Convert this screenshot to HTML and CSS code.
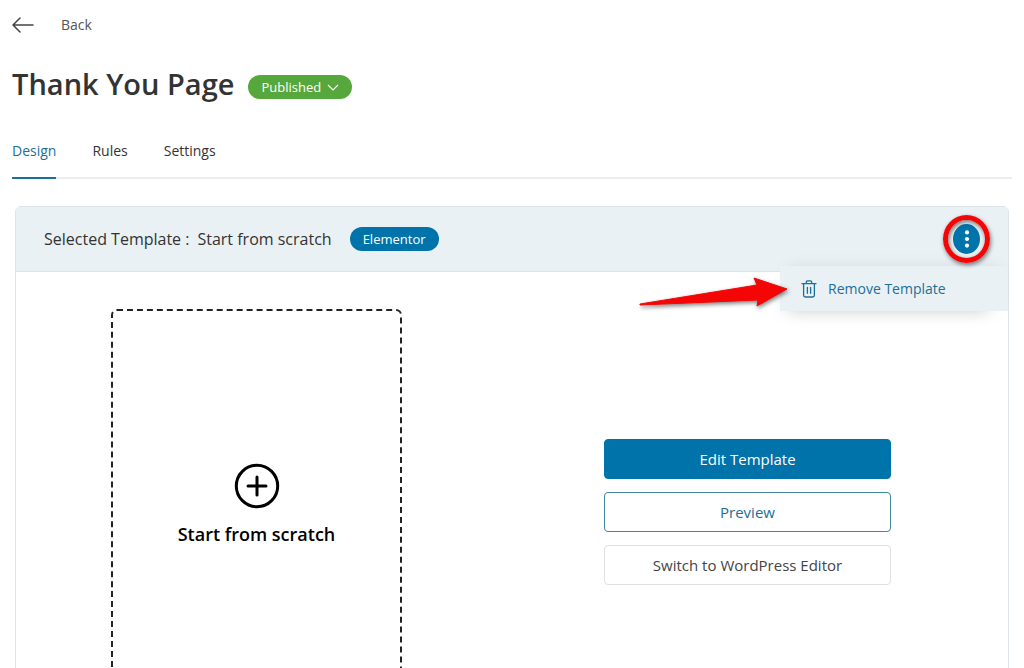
FILE: index.html
```html
<!DOCTYPE html>
<html lang="en">
<head>
    <meta charset="UTF-8">
    <meta name="viewport" content="width=device-width, initial-scale=1.0">
    <title>Thank You Page</title>
    <link rel="stylesheet" href="styles.css">
</head>
<body>
    <div class="page">
        <a href="#" class="back">
            <svg width="22" height="16" viewBox="0 0 22 16" fill="none" stroke="#444" stroke-width="1.5" stroke-linecap="round" stroke-linejoin="round">
                <path d="M21 8H1M8 1L1 8l7 7"/>
            </svg>
            <span>Back</span>
        </a>

        <header class="title">
            <h1>Thank You Page</h1>
            <button type="button" class="badge badge-green">
                Published
                <svg width="12" height="7" viewBox="0 0 12 7" fill="none" stroke="currentColor" stroke-width="1.1">
                    <path d="M1 1l5 5 5-5"/>
                </svg>
            </button>
        </header>

        <nav class="tabs">
            <a href="#" class="tab active">Design</a>
            <a href="#" class="tab">Rules</a>
            <a href="#" class="tab">Settings</a>
        </nav>

        <section class="card">
            <div class="card-header">
                <h2><span>Selected Template :</span><span>Start from scratch</span></h2>
                <span class="badge badge-blue">Elementor</span>
                <div class="more">
                    <button type="button" class="more-btn" aria-label="More options">
                        <svg width="6" height="18" viewBox="0 0 6 18" fill="#fff">
                            <circle cx="3" cy="2.4" r="2.1"/>
                            <circle cx="3" cy="9" r="2.1"/>
                            <circle cx="3" cy="15.6" r="2.1"/>
                        </svg>
                    </button>
                    <span class="ring"></span>
                </div>
                <div class="menu">
                    <button type="button" class="menu-item">
                        <svg width="16" height="18" viewBox="0 0 16 18" fill="none" stroke="currentColor" stroke-width="1.3" stroke-linecap="round" stroke-linejoin="round">
                            <path d="M1 3.7h14M5.3 3.5V2.2q0-1.3 1.3-1.3h2.8q1.3 0 1.3 1.3v1.3M2.6 3.8v11.4q0 1.8 1.8 1.8h7.2q1.8 0 1.8-1.8V3.8M6.4 7.3v6M9.6 7.3v6"/>
                        </svg>
                        Remove Template
                    </button>
                </div>
                <svg class="arrow" width="156" height="40" viewBox="0 0 156 40">
                    <path d="M2 28L119 9 116 2 149 13 119 30 120 24 2 29z"/>
                </svg>
            </div>

            <div class="card-body">
                <a href="#" class="scratch">
                    <svg width="46" height="46" viewBox="0 0 46 46" fill="none" stroke="#000" stroke-width="3" stroke-linecap="round">
                        <circle cx="23" cy="23" r="20.7"/>
                        <path d="M23 14v18M14 23h18"/>
                    </svg>
                    <span>Start from scratch</span>
                </a>
                <div class="actions">
                    <button type="button" class="btn btn-primary">Edit Template</button>
                    <button type="button" class="btn btn-outline">Preview</button>
                    <button type="button" class="btn">Switch to WordPress Editor</button>
                </div>
            </div>
        </section>
    </div>
</body>
</html>
```
FILE: styles.css
```css
:root{
    --blue: #0073aa;
    --link: #1c6f99;
    --green: #56a83c;
    --red: #f40606;
    --panel: #e9f1f5;
}
*{
    box-sizing: border-box;
}
body{
    margin: 0;
    background-color: #fff;
    color: #333;
    font-family: "Segoe UI", "Open Sans", "Noto Sans", sans-serif;
    font-size: 14px;
    line-height: 20px;
}
a{
    color: inherit;
    text-decoration: none;
}
button{
    font: inherit;
    cursor: pointer;
}
svg{
    flex: none;
}
.page{
    padding: 15px 12px;
}
.back{
    display: flex;
    align-items: center;
    gap: 27px;
    color: #555;
}
.title{
    display: flex;
    align-items: flex-end;
    gap: 14px;
    margin-top: 29px;
}
h1{
    margin: 0;
    font-size: 29px;
    font-weight: 600;
    line-height: 40px;
}
.badge{
    display: flex;
    align-items: center;
    gap: 6px;
    height: 24px;
    padding: 0 13px;
    border: 0;
    border-radius: 12px;
    color: #fff;
    font-size: 13px;
    font-weight: 500;
}
.badge-green{
    margin-bottom: 5px;
    background-color: var(--green);
}
.badge-blue{
    background-color: var(--blue);
}
.tabs{
    display: flex;
    gap: 36px;
    margin-top: 37px;
    border-bottom: 2px solid #ececec;
}
.tab{
    margin-bottom: -2px;
    padding-bottom: 16px;
    border-bottom: 2px solid transparent;
    font-weight: 500;
}
.tab.active{
    color: var(--link);
    border-color: var(--link);
}
.card{
    margin: 27px 3px 0;
    border: 1px solid #dde3e6;
    border-radius: 6px;
}
.card-header{
    position: relative;
    display: flex;
    align-items: center;
    gap: 18px;
    height: 65px;
    padding: 0 28px;
    background-color: var(--panel);
    border-bottom: 1px solid #dde3e6;
    border-radius: 5px 5px 0 0;
}
h2{
    display: flex;
    gap: 8px;
    margin: 0;
    color: #333;
    font-size: 16px;
    font-weight: 500;
}
.more{
    position: relative;
    z-index: 1;
    margin-left: auto;
}
.more-btn{
    display: flex;
    align-items: center;
    justify-content: center;
    width: 27px;
    height: 30px;
    padding: 0;
    border: 0;
    border-radius: 50%;
    background-color: var(--blue);
}
.ring{
    position: absolute;
    inset: -9px -10px;
    border: 5px solid var(--red);
    border-radius: 50%;
    box-shadow: 1px 2px 4px rgba(0, 0, 0, 0.5), inset 1px 2px 4px rgba(0, 0, 0, 0.5);
    pointer-events: none;
}
.menu{
    position: absolute;
    top: 59px;
    right: 0;
    width: 228px;
    background-color: var(--panel);
    box-shadow: 0 -6px 16px -8px rgba(0, 0, 0, 0.1), -6px 12px 18px -14px rgba(0, 0, 0, 0.25);
}
.menu-item{
    display: flex;
    align-items: center;
    gap: 11px;
    width: 100%;
    height: 45px;
    padding: 0 21px;
    border: 0;
    background: none;
    color: var(--link);
    font-weight: 500;
}
.arrow{
    position: absolute;
    top: 69px;
    right: 214px;
    fill: var(--red);
    stroke: var(--red);
    stroke-linejoin: round;
    filter: drop-shadow(1px 2px 2px rgba(0, 0, 0, 0.5));
}
.card-body{
    display: flex;
    align-items: center;
    justify-content: space-between;
    padding: 37px 117px 37px 95px;
}
.scratch{
    display: flex;
    flex-direction: column;
    align-items: center;
    justify-content: center;
    gap: 13px;
    width: 291px;
    height: 406px;
    padding-bottom: 16px;
    border: 2px dashed #222;
    border-radius: 6px;
    color: #000;
    font-size: 18px;
    font-weight: 600;
    line-height: 24px;
}
.actions{
    display: flex;
    flex-direction: column;
    gap: 13px;
    width: 287px;
}
.btn{
    height: 40px;
    border: 1px solid #e0e0e0;
    border-radius: 4px;
    background-color: #fff;
    color: #444;
    font-size: 15px;
}
.btn-primary{
    border-color: var(--blue);
    background-color: var(--blue);
    color: #fff;
}
.btn-outline{
    border-color: #3f8799;
    color: var(--link);
}
```
